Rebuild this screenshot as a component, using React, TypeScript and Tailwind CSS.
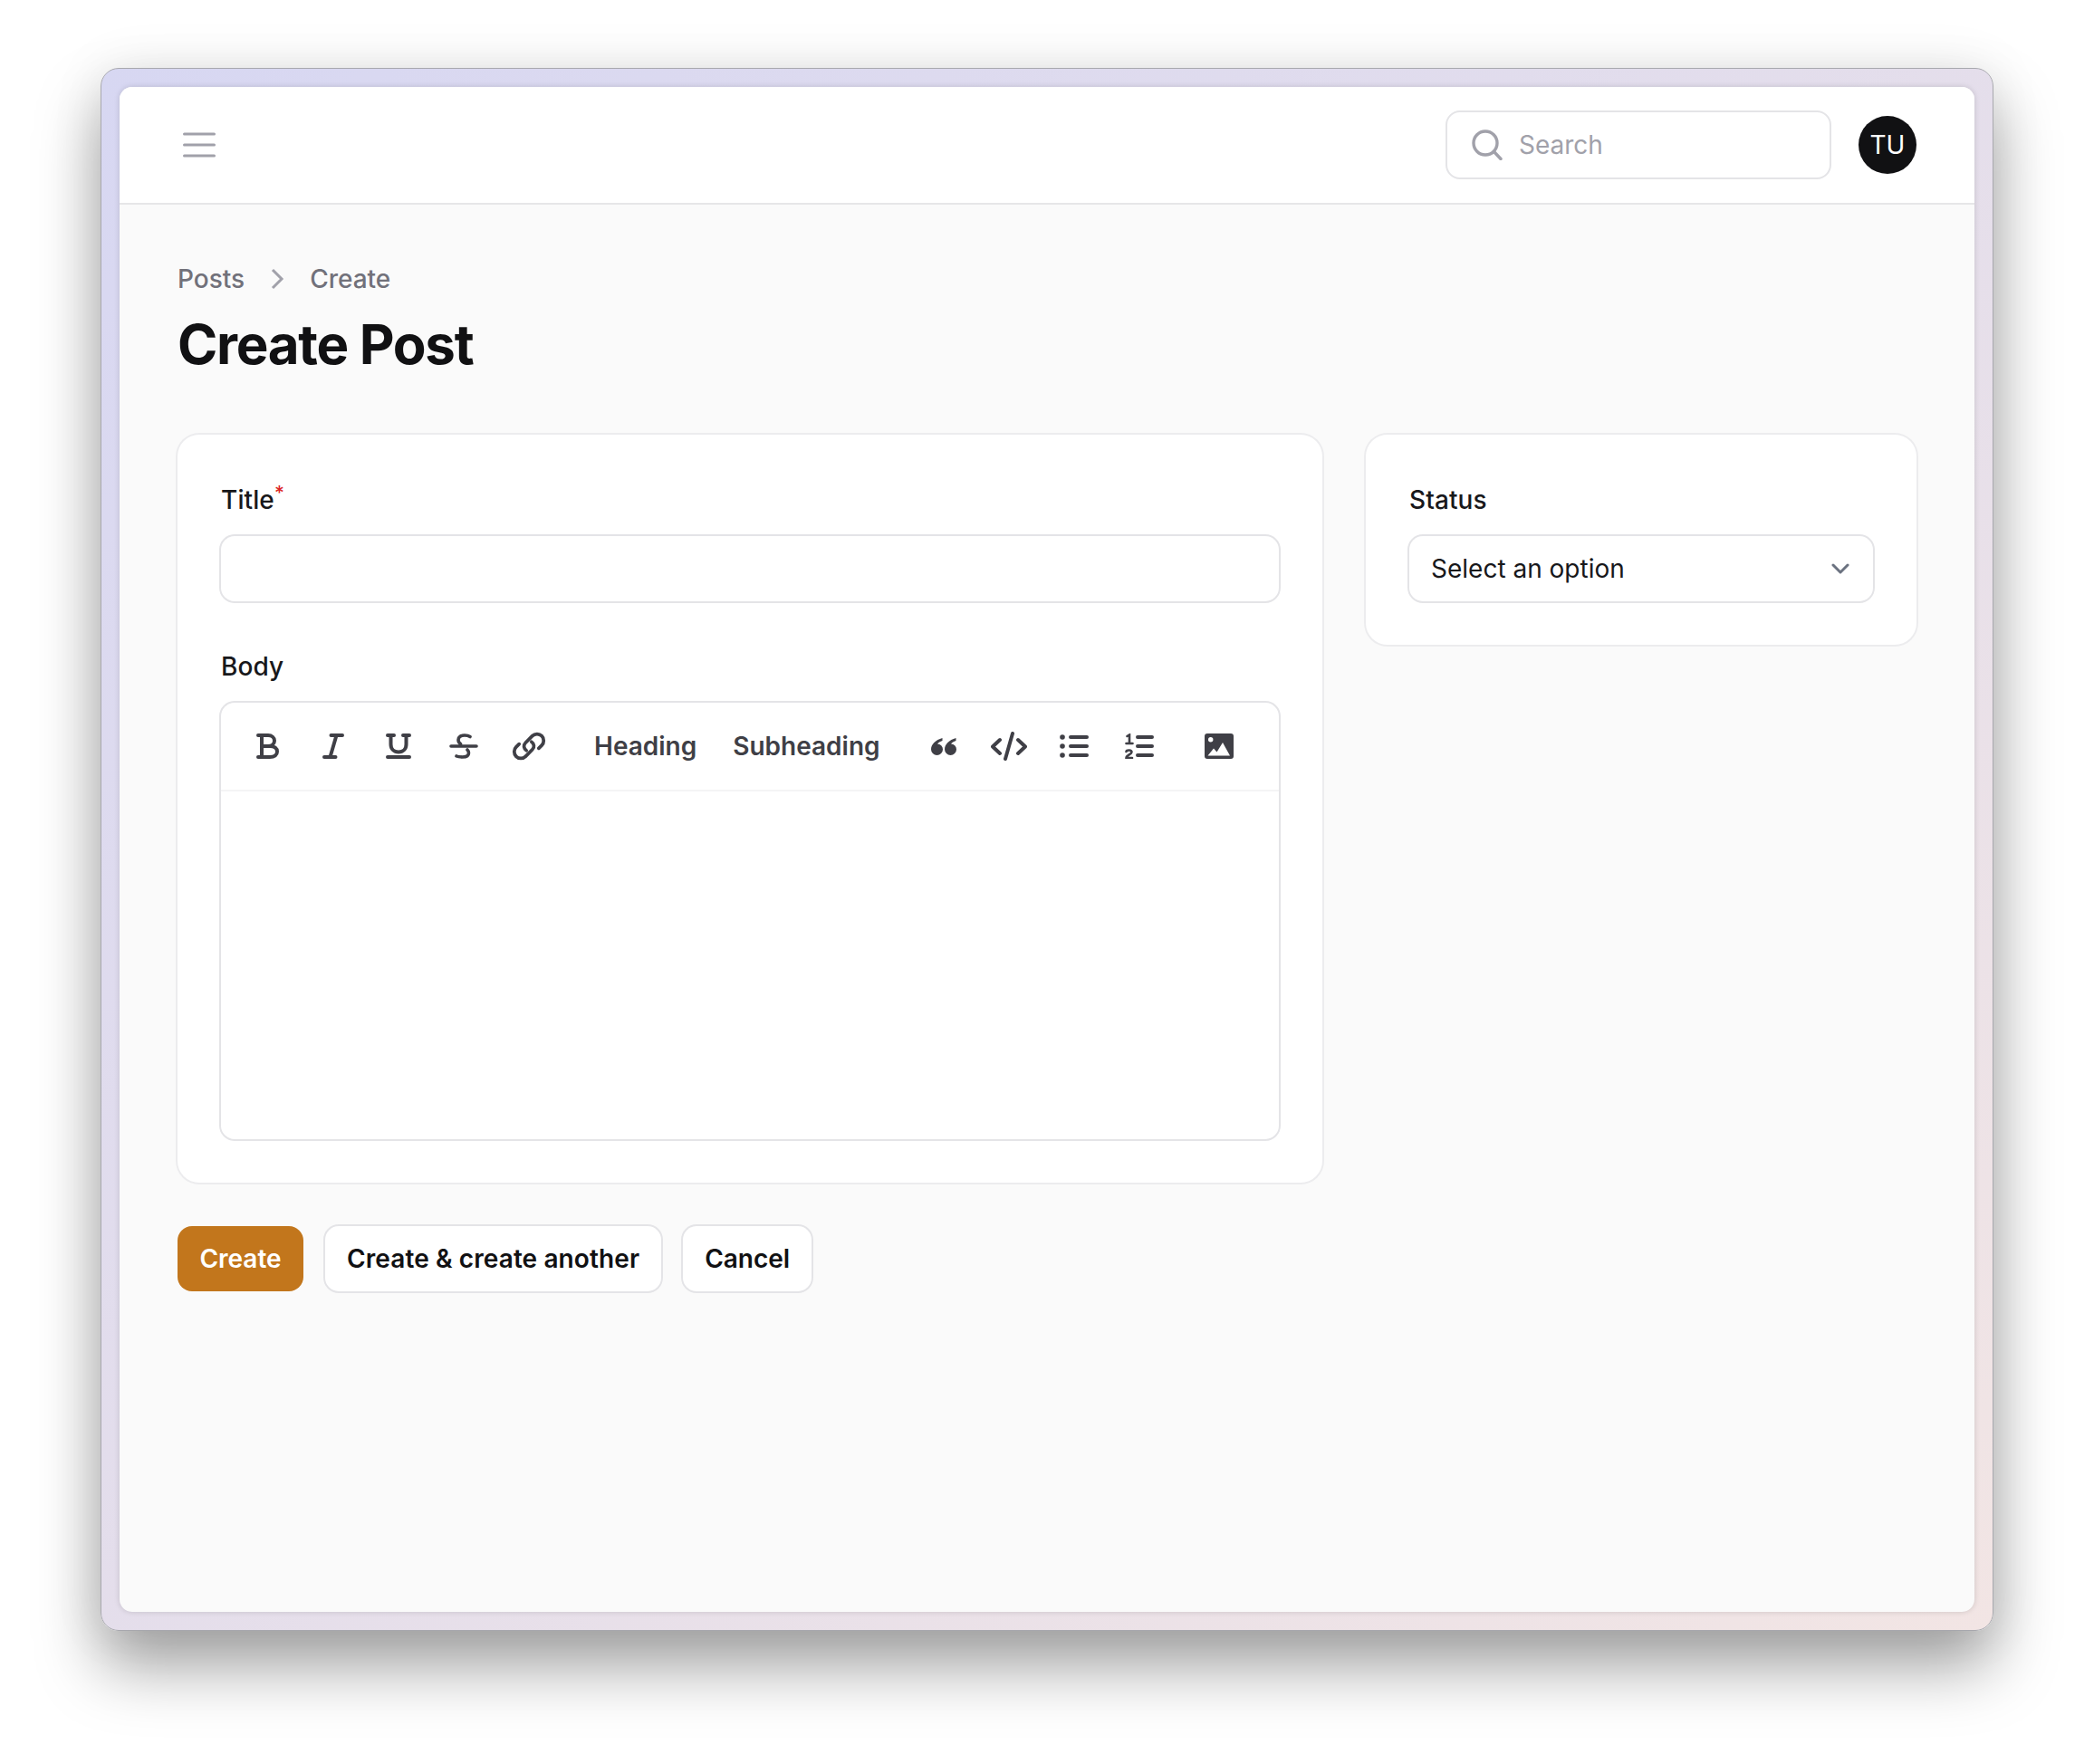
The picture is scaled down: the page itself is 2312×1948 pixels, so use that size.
const font = "font-['Inter','Noto_Sans',sans-serif]";

function Tool({ children }: { children: React.ReactNode }) {
  return <button type="button" className="flex h-16 w-16 items-center justify-center text-[#3f3f46]">{children}</button>;
}

function TextTool({ label }: { label: string }) {
  return <button type="button" className="h-16 px-4 text-[28px] font-[560] text-[#3f3f46]">{label}</button>;
}

function Label({ text, required }: { text: string; required?: boolean }) {
  return (
    <label className="block text-[28px] leading-10 font-medium tracking-[0.1px] text-[#18181b]">
      {text}
      {required && <sup className="text-[#dc2626] font-medium">*</sup>}
    </label>
  );
}

export default function App() {
  return (
    <div className={`min-h-screen bg-white pt-[75px] pl-[111px] ${font}`}>
      <div className="h-[1726px] w-[2090px] rounded-[20px] border border-[#a8a8ae] bg-gradient-to-br from-[#d7d7f2] to-[#f2e5e4] p-[20px] shadow-[0_40px_70px_rgba(0,0,0,0.36),0_0_60px_rgba(0,0,0,0.08)]">
        <div className="flex h-full flex-col overflow-hidden rounded-[14px] bg-[#fafafa] shadow-[0_0_6px_rgba(0,0,0,0.15)]">
          <header className="flex h-[130px] shrink-0 items-center justify-between border-b-2 border-[#e6e6e8] bg-white pr-[64px] pl-[70px]">
            <svg width="36" height="28" viewBox="0 0 36 28" fill="none" stroke="#a1a1aa" strokeWidth="3" strokeLinecap="round">
              <path d="M1.5 2h33M1.5 14h33M1.5 26h33" />
            </svg>
            <div className="flex items-center gap-[30px]">
              <div className="flex h-[76px] w-[426px] items-center gap-[18px] rounded-[16px] border-2 border-[#e4e4e7] bg-white pl-[27px]">
                <svg width="34" height="34" viewBox="0 0 34 34" fill="none" stroke="#a1a1aa" strokeWidth="3.4" strokeLinecap="round">
                  <circle cx="15" cy="15" r="13" />
                  <path d="M24.5 24.5L32 32.5" />
                </svg>
                <span className="text-[28px] text-[#a1a1aa]">Search</span>
              </div>
              <div className="flex h-16 w-16 items-center justify-center rounded-full bg-[#111113] text-[28px] text-white">TU</div>
            </div>
          </header>

          <main className="px-[64px] pt-[62px]">
            <nav className="flex items-center gap-[28px] text-[28px] leading-10 font-medium text-[#71717a]">
              <span>Posts</span>
              <svg width="16" height="24" viewBox="0 0 16 24" fill="none" stroke="#a1a1aa" strokeWidth="3">
                <path d="M3 2l10 10L3 22" />
              </svg>
              <span>Create</span>
            </nav>
            <h1 className="mt-[16px] text-[60px] leading-[72px] font-bold tracking-[-1.3px] text-[#111113]">Create Post</h1>

            <div className="mt-[64px] grid grid-cols-3 items-start gap-[48px]">
              <section className="col-span-2 rounded-[24px] bg-white px-[48px] pt-[52px] pb-[48px] ring-2 ring-[#ececee]">
                <Label text="Title" required />
                <div className="mt-[20px] h-[72px] rounded-[15px] bg-white ring-2 ring-[#e4e4e7]" />
                <div className="mt-[52px]">
                  <Label text="Body" />
                </div>
                <div className="mt-[20px] h-[482px] rounded-[15px] bg-white ring-2 ring-[#e4e4e7]">
                  <div className="flex h-[98px] items-center gap-6 border-b-2 border-[#f4f4f5] pl-[20px]">
                    <div className="flex gap-2">
                      <Tool>
                        <svg width="26" height="28" viewBox="0 0 26 28" fill="none" stroke="currentColor" strokeWidth="4" strokeLinecap="round">
                          <path d="M2 2h11c4 0 7 2.500 7 6s-3 6-7 6H6M6 2v24M2 26h13c5 0 8-2.500 8-6s-3-6-8-6" />
                        </svg>
                      </Tool>
                      <Tool>
                        <svg width="24" height="28" viewBox="0 0 24 28" fill="none" stroke="currentColor" strokeWidth="4" strokeLinecap="round">
                          <path d="M9.500 2h12.500M2 26h12.500M15.500 2L8.500 26" />
                        </svg>
                      </Tool>
                      <Tool>
                        <svg width="28" height="28" viewBox="0 0 28 28" fill="none" stroke="currentColor" strokeWidth="4" strokeLinecap="round">
                          <path d="M2 2h7M19 2h7M5.500 2v10c0 5 3.500 8.500 8.500 8.500s8.500-3.500 8.500-8.500V2M2 26h24" />
                        </svg>
                      </Tool>
                      <Tool>
                        <svg width="32" height="28" viewBox="0 0 32 28" fill="none" stroke="currentColor" strokeWidth="3.6" strokeLinecap="round">
                          <path d="M2 14h28M23 3.500C21.500 2.500 19.500 2 17 2c-4 0-7 1.800-7 5 0 2 1 3.500 2.500 4.500M8 25c2 1 4 1 6.500 1 4 0 7-1.500 7-4.500 0-1.500-.5-2.500-1.500-3.500" />
                        </svg>
                      </Tool>
                      <Tool>
                        <svg width="40" height="32" viewBox="0 0 40 34" fill="none" stroke="currentColor" strokeWidth="4" strokeLinecap="round" strokeLinejoin="round">
                          <path d="M17 22c-3-2-4-6-1-9l8-8c3-3 8-3 11 0s3 8 0 11l-3.500 3.500" />
                          <path d="M23 12c3 2 4 6 1 9l-8 8c-3 3-8 3-11 0s-3-8 0-11l3.500-3.500" />
                        </svg>
                      </Tool>
                    </div>
                    <div className="flex gap-2">
                      <TextTool label="Heading" />
                      <TextTool label="Subheading" />
                    </div>
                    <div className="-ml-[2px] flex gap-2">
                      <Tool>
                        <svg width="28" height="20" viewBox="0 0 28 20" fill="currentColor">
                          <path d="M12.500 1C5 3 0 8 0 13.500a6.500 6.500 0 0 0 13 0 6 6 0 0 0-6-6c1-1.500 3-2.500 5.500-3.500z" />
                          <path d="M27.500 1C20 3 15 8 15 13.500a6.500 6.500 0 0 0 13 0 6 6 0 0 0-6-6c1-1.500 3-2.500 5.500-3.500z" />
                        </svg>
                      </Tool>
                      <Tool>
                        <svg width="40" height="32" viewBox="0 0 40 32" fill="none" stroke="currentColor" strokeWidth="4" strokeLinecap="round" strokeLinejoin="round">
                          <path d="M10 9l-8 7.500 8 7.500M30 9l8 7.500-8 7.500M24 2L16 30" />
                        </svg>
                      </Tool>
                      <Tool>
                        <svg width="32" height="28" viewBox="0 0 32 28" fill="none" stroke="currentColor" strokeWidth="4" strokeLinecap="round">
                          <path d="M12 4h18M12 14h18M12 24h18" />
                          <circle cx="3" cy="4" r="2.800" fill="currentColor" stroke="none" />
                          <circle cx="3" cy="14" r="2.800" fill="currentColor" stroke="none" />
                          <circle cx="3" cy="24" r="2.800" fill="currentColor" stroke="none" />
                        </svg>
                      </Tool>
                      <Tool>
                        <svg width="32" height="28" viewBox="0 0 32 28" fill="none" stroke="currentColor" strokeLinecap="round">
                          <path d="M14 4h16M14 14h16M14 24h16" strokeWidth="4" />
                          <path d="M2.500 3l2.500-1.500V11M1.500 11h7M1.500 20c.5-2 6-2 6 .5 0 2.500-6 3.500-6 6.500h6.500" strokeWidth="2.600" />
                        </svg>
                      </Tool>
                    </div>
                    <div className="flex gap-2">
                      <Tool>
                        <svg width="32" height="28" viewBox="0 0 32 28">
                          <rect width="32" height="28" rx="3" fill="currentColor" />
                          <circle cx="6.700" cy="6.700" r="2.700" fill="#fff" />
                          <path d="M3.500 24.500L10 16.500l3.500 4L20 10l8 14.500z" fill="#fff" />
                        </svg>
                      </Tool>
                    </div>
                  </div>
                </div>
              </section>

              <section className="rounded-[24px] bg-white px-[48px] pt-[52px] pb-[48px] ring-2 ring-[#ececee]">
                <Label text="Status" />
                <div className="mt-[20px] flex h-[72px] items-center justify-between rounded-[15px] bg-white px-[24px] ring-2 ring-[#e4e4e7]">
                  <span className="text-[28px] text-[#18181b]">Select an option</span>
                  <svg width="24" height="24" viewBox="0 0 24 24" fill="none" stroke="#6b7280" strokeWidth="3" strokeLinecap="round" strokeLinejoin="round">
                    <path d="M4 8l8 8 8-8" />
                  </svg>
                </div>
              </section>
            </div>

            <div className="mt-[48px] flex gap-[24px]">
              <button type="button" className="h-[72px] w-[139px] rounded-[16px] bg-[#c2761c] text-[28px] font-semibold text-white">Create</button>
              <button type="button" className="h-[72px] rounded-[15px] bg-white px-[24px] text-[28px] font-semibold tracking-[0.1px] text-[#111113] ring-2 ring-[#e4e4e7]">Create &amp; create another</button>
              <button type="button" className="h-[72px] rounded-[15px] bg-white px-[24px] text-[28px] font-semibold text-[#111113] ring-2 ring-[#e4e4e7]">Cancel</button>
            </div>
          </main>
        </div>
      </div>
    </div>
  );
}
